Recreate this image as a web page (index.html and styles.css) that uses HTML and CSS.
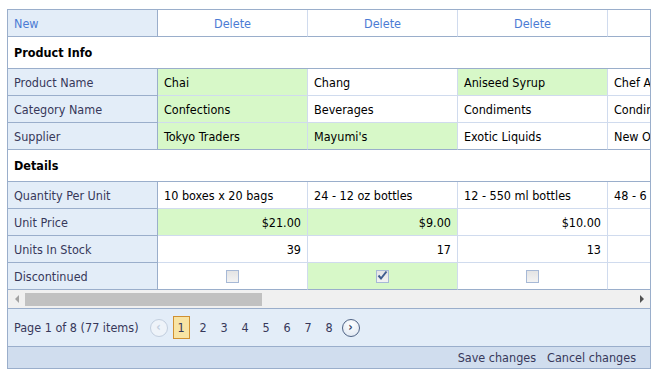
FILE: index.html
```html
<!DOCTYPE html>
<html lang="en">
<head>
    <meta charset="utf-8">
    <title>Products - Vertical Grid</title>
    <link rel="stylesheet" href="styles.css">
</head>
<body>
    <div class="grid">
        <div class="viewport">
            <table class="vgrid">
                <colgroup>
                    <col><col><col><col><col>
                </colgroup>
                <tr class="cmd">
                    <td class="label"><a href="#">New</a></td>
                    <td class="center"><a href="#">Delete</a></td>
                    <td class="center"><a href="#">Delete</a></td>
                    <td class="center"><a href="#">Delete</a></td>
                    <td class="center"></td>
                </tr>
                <tr class="group">
                    <td colspan="5">Product Info</td>
                </tr>
                <tr>
                    <td class="label">Product Name</td>
                    <td class="edited">Chai</td>
                    <td>Chang</td>
                    <td class="edited">Aniseed Syrup</td>
                    <td>Chef Anton's Cajun Seasoning</td>
                </tr>
                <tr>
                    <td class="label">Category Name</td>
                    <td class="edited">Confections</td>
                    <td>Beverages</td>
                    <td>Condiments</td>
                    <td>Condiments</td>
                </tr>
                <tr>
                    <td class="label">Supplier</td>
                    <td class="edited">Tokyo Traders</td>
                    <td class="edited">Mayumi's</td>
                    <td>Exotic Liquids</td>
                    <td>New Orleans Cajun Delights</td>
                </tr>
                <tr class="group">
                    <td colspan="5">Details</td>
                </tr>
                <tr>
                    <td class="label">Quantity Per Unit</td>
                    <td>10 boxes x 20 bags</td>
                    <td>24 - 12 oz bottles</td>
                    <td>12 - 550 ml bottles</td>
                    <td>48 - 6 oz jars</td>
                </tr>
                <tr>
                    <td class="label">Unit Price</td>
                    <td class="edited num">$21.00</td>
                    <td class="edited num">$9.00</td>
                    <td class="num">$10.00</td>
                    <td class="num"></td>
                </tr>
                <tr>
                    <td class="label">Units In Stock</td>
                    <td class="num">39</td>
                    <td class="num">17</td>
                    <td class="num">13</td>
                    <td class="num"></td>
                </tr>
                <tr>
                    <td class="label">Discontinued</td>
                    <td class="center"><span class="check"></span></td>
                    <td class="center edited"><span class="check on"><svg width="11" height="11" viewBox="0 0 11 11"><path d="M1.5 5.5 L4 8.5 L9.5 1.5" fill="none" stroke="#3f5d8f" stroke-width="2"/></svg></span></td>
                    <td class="center"><span class="check"></span></td>
                    <td class="center"></td>
                </tr>
            </table>
        </div>
        <div class="hscroll">
            <span class="arrow left"></span>
            <div class="track"><div class="thumb"></div></div>
            <span class="arrow right"></span>
        </div>
        <div class="pager">
            <span class="summary">Page 1 of 8 (77 items)</span>
            <span class="nav disabled">&lsaquo;</span>
            <span class="page current">1</span>
            <a class="page" href="#">2</a>
            <a class="page" href="#">3</a>
            <a class="page" href="#">4</a>
            <a class="page" href="#">5</a>
            <a class="page" href="#">6</a>
            <a class="page" href="#">7</a>
            <a class="page" href="#">8</a>
            <a class="nav" href="#">&rsaquo;</a>
        </div>
        <div class="status">
            <a href="#">Save changes</a>
            <a href="#">Cancel changes</a>
        </div>
    </div>
</body>
</html>
```

FILE: styles.css
```css
body {
    margin: 0;
    padding: 9px 7px;
    font-family: "DejaVu Sans Condensed", "DejaVu Sans", sans-serif;
    font-size: 12.5px;
    color: #000;
}
a {
    text-decoration: none;
}
.grid {
    width: 644px;
    box-sizing: border-box;
    border: 1px solid #9aaecb;
}
.viewport {
    overflow: hidden;
}
.vgrid {
    border-collapse: separate;
    border-spacing: 0;
    table-layout: fixed;
    width: 750px;
}
.vgrid col {
    width: 150px;
}
.vgrid td {
    box-sizing: border-box;
    height: 27px;
    padding: 0 6px;
    border-right: 1px solid #d0dbee;
    border-bottom: 1px solid #d0dbee;
    white-space: nowrap;
    overflow: hidden;
    vertical-align: middle;
    background: #fff;
}
.vgrid td.label {
    background: #e3edf8;
    color: #37385a;
    border-right-color: #9aaecb;
    border-bottom-color: #9aaecb;
}
.vgrid tr.cmd td {
    border-bottom-color: #9aaecb;
}
.vgrid tr.cmd a {
    color: #4b7bd4;
}
.vgrid tr.group td {
    height: 32px;
    font-weight: bold;
    border-right: none;
    border-bottom-color: #9aaecb;
}
.vgrid tr:nth-child(5) td {
    border-bottom-color: #9aaecb;
}
.vgrid tr:last-child td {
    border-bottom-color: #9aaecb;
}
.vgrid td.edited {
    background: #d7f8c8;
}
.vgrid td.center {
    text-align: center;
}
.vgrid td.num {
    text-align: right;
}
.check {
    display: inline-block;
    width: 13px;
    height: 13px;
    box-sizing: border-box;
    border: 1px solid #a7b9d6;
    background: linear-gradient(#e4e4e4, #f3f3f3);
    vertical-align: middle;
    position: relative;
    top: -1px;
}
.check svg {
    display: block;
    margin-top: -1px;
}
.hscroll {
    display: flex;
    align-items: center;
    height: 19px;
    box-sizing: border-box;
    border-bottom: 1px solid #9aaecb;
    background: #f0f0f0;
}
.arrow {
    width: 17px;
    display: flex;
    justify-content: center;
}
.arrow.left::before {
    content: "";
    border-top: 4px solid transparent;
    border-bottom: 4px solid transparent;
    border-right: 4px solid #a3a3a3;
}
.arrow.right {
    margin-left: auto;
}
.arrow.right::before {
    content: "";
    border-top: 4px solid transparent;
    border-bottom: 4px solid transparent;
    border-left: 4px solid #505050;
}
.track {
    flex: 1;
    height: 13px;
}
.thumb {
    width: 237px;
    height: 13px;
    background: #c1c1c1;
}
.pager {
    display: flex;
    align-items: center;
    height: 38px;
    box-sizing: border-box;
    padding: 0 6px;
    background: #e3edf8;
    border-bottom: 1px solid #9aaecb;
    color: #37385a;
}
.summary {
    margin-right: 9px;
}
.nav {
    width: 16px;
    height: 16px;
    border-radius: 50%;
    border: 1px solid #4f6385;
    background: radial-gradient(circle at 50% 30%, #ffffff, #dbe4f0);
    color: #34486c;
    font-weight: bold;
    font-size: 12px;
    line-height: 14px;
    text-align: center;
    margin: 0 2px;
}
.nav.disabled {
    border-color: #c2cede;
    color: #c2cede;
    background: #eef3f9;
}
.page {
    width: 21px;
    text-align: center;
    color: #37385a;
}
.page.current {
    width: 15px;
    height: 21px;
    line-height: 21px;
    margin: 0 3px;
    border: 1px solid #d09032;
    background: #f8e4a4;
}
.status {
    display: flex;
    justify-content: flex-end;
    gap: 11px;
    height: 21px;
    align-items: center;
    padding-right: 14px;
    background: #d0ddee;
}
.status a {
    color: #37385a;
}
```
